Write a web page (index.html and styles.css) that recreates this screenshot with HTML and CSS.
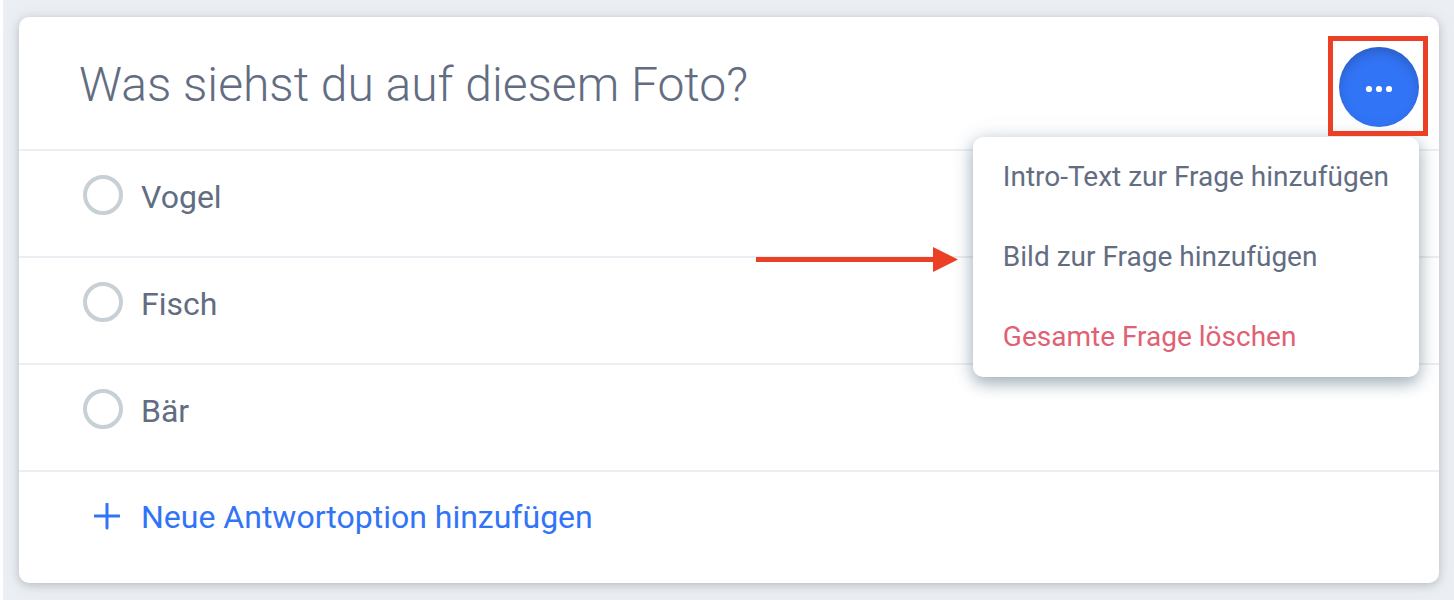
FILE: index.html
```html
<!DOCTYPE html>
<html lang="de">
<head>
<meta charset="utf-8">
<meta name="viewport" content="width=device-width, initial-scale=1">
<title>Frage bearbeiten</title>
<link rel="stylesheet" href="styles.css">
</head>
<body>
<main class="page">
  <section class="card">
    <header class="card-header">
      <h1 class="question">Was siehst du auf diesem Foto?</h1>
      <div class="actions">
        <button class="more" type="button" aria-label="Weitere Optionen" aria-expanded="true">
          <svg width="28" height="8" viewBox="0 0 28 8" aria-hidden="true"><circle cx="4" cy="4" r="3.1"/><circle cx="14" cy="4" r="3.1"/><circle cx="24" cy="4" r="3.1"/></svg>
        </button>
        <div class="menu">
          <button class="menu-item" type="button">Intro-Text zur Frage hinzufügen</button>
          <button class="menu-item" type="button">Bild zur Frage hinzufügen</button>
          <button class="menu-item danger" type="button">Gesamte Frage löschen</button>
          <svg class="arrow" width="202" height="26" viewBox="0 0 202 26" aria-hidden="true"><path d="M0 10h177V0l25 12.5L177 25V15H0z"/></svg>
        </div>
        <span class="highlight"></span>
      </div>
    </header>
    <label class="option"><input class="radio" type="radio" name="answer"><span>Vogel</span></label>
    <label class="option"><input class="radio" type="radio" name="answer"><span>Fisch</span></label>
    <label class="option"><input class="radio" type="radio" name="answer"><span>Bär</span></label>
    <button class="add" type="button">
      <svg class="plus" width="26" height="28" viewBox="0 0 26 28" aria-hidden="true"><path d="M13 1v24M1 13h24"/></svg>
      <span>Neue Antwortoption hinzufügen</span>
    </button>
  </section>
</main>
</body>
</html>
```
FILE: styles.css
```css
* {
  box-sizing: border-box;
}

body {
  margin: 0;
  background: #ebeff3;
  color: #626d82;
  font-family: Roboto, "Liberation Sans", sans-serif;
}

button {
  border: 0;
  background: none;
  color: inherit;
  font: inherit;
  text-align: left;
  cursor: pointer;
}

.page {
  min-height: 100vh;
  padding: 17px 15px 17px 16px;
  border-left: 3px solid #fff;
}

.card {
  border-radius: 10px;
  background: #fff;
  box-shadow: 0 2px 8px rgba(90, 95, 115, 0.32), 0 2px 20px rgba(98, 100, 120, 0.07);
}

.card-header {
  display: flex;
  align-items: flex-start;
  justify-content: space-between;
  padding: 30px 20px 22px 60px;
}

.question {
  margin: 8px 0 0;
  font-size: 48px;
  font-weight: 300;
  line-height: 60px;
}

.actions {
  position: relative;
}

.more {
  display: grid;
  place-items: center;
  width: 80px;
  height: 80px;
  padding: 4px 0 0;
  border-radius: 50%;
  background: #3274f6;
  box-shadow: inset 0 6px 12px -2px rgba(30, 50, 90, 0.35);
  fill: #fff;
}

.highlight {
  position: absolute;
  inset: -11px -9px -9px -11px;
  border: 5px solid #eb4025;
  pointer-events: none;
}

.menu {
  position: absolute;
  top: 90px;
  right: 0;
  border-radius: 10px;
  background: #fff;
  box-shadow: 0 6px 16px rgba(69, 100, 120, 0.48), 0 0 24px rgba(69, 100, 120, 0.12);
}

.menu-item {
  display: block;
  width: 100%;
  height: 80px;
  padding: 0 30px;
  font-size: 28px;
  line-height: 40px;
  white-space: nowrap;
}

.danger {
  color: #e06173;
}

.arrow {
  position: absolute;
  top: 110px;
  right: calc(100% + 15px);
  fill: #eb4025;
}

.option,
.add {
  display: flex;
  width: 100%;
  border-top: 2px solid #ebeff3;
  font-size: 32px;
  line-height: 40px;
}

.option {
  gap: 18px;
  height: 107px;
  padding: 24px 64px;
}

.option span {
  padding-top: 2px;
}

.radio {
  appearance: none;
  flex: none;
  width: 40px;
  height: 40px;
  margin: 0;
  border: 4px solid #c7d0d5;
  border-radius: 50%;
}

.radio:checked {
  background: radial-gradient(#3274f6 50%, transparent 55%);
}

.add {
  align-items: center;
  gap: 21px;
  padding: 25px 75px 46px;
  color: #3274f6;
}

.plus {
  flex: none;
  fill: none;
  stroke: #3274f6;
  stroke-width: 3;
  stroke-linecap: round;
}
```
